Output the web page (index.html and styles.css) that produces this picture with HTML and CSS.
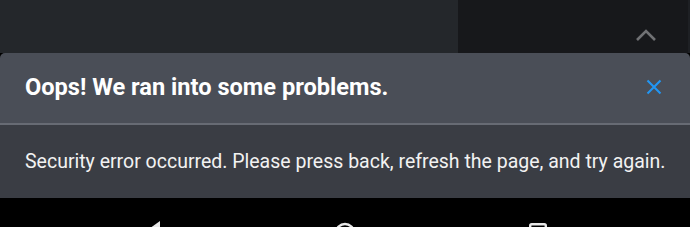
FILE: index.html
```html
<!DOCTYPE html>
<html lang="en">
<head>
<meta charset="utf-8">
<title>Error</title>
<link rel="stylesheet" href="styles.css">
</head>
<body>
<div class="screen">
  <div class="topbar">
    <div class="top-main"></div>
    <div class="top-side">
      <svg class="chevron" width="22" height="14" viewBox="0 0 22 14"><path d="M2 12 L11 3 L20 12" fill="none" stroke="#707174" stroke-width="2.6"/></svg>
    </div>
  </div>
  <div class="dialog">
    <div class="dialog-header">
      <h1 class="dialog-title">Oops! We ran into some problems.</h1>
      <button class="close" aria-label="Close">
        <svg width="16" height="16" viewBox="0 0 16 16"><path d="M1.5 1.5 L14.5 14.5 M14.5 1.5 L1.5 14.5" stroke="#2196f3" stroke-width="2.1" fill="none"/></svg>
      </button>
    </div>
    <div class="dialog-body">
      <p class="message">Security error occurred. Please press back, refresh the page, and try again.</p>
    </div>
  </div>
  <div class="navbar">
    <svg class="nav-back" width="20" height="20" viewBox="0 0 20 20"><path d="M17 0 L17 20 L3 10 Z" fill="#e8e8e8"/></svg>
    <svg class="nav-home" width="22" height="22" viewBox="0 0 22 22"><circle cx="11" cy="11" r="9" fill="none" stroke="#e8e8e8" stroke-width="2.4"/></svg>
    <svg class="nav-recent" width="18" height="18" viewBox="0 0 18 18"><rect x="1.2" y="1.2" width="15.6" height="15.6" rx="1.5" fill="none" stroke="#e8e8e8" stroke-width="2.4"/></svg>
  </div>
</div>
</body>
</html>
```
FILE: styles.css
```css
* { box-sizing: border-box; }
html, body { margin: 0; padding: 0; background: #000; }
body { font-family: Roboto, "Noto Sans", Arial, sans-serif; }
.screen { width: 690px; height: 227px; display: flex; flex-direction: column; overflow: hidden; background: #000; }
.topbar { height: 53px; display: flex; flex: none; }
.top-main { width: 458px; background: #24272b; }
.top-side { flex: 1; background: #17181b; display: flex; justify-content: flex-end; align-items: flex-start; padding: 28px 31px 0 0; border-right: 2px solid #1e2024; }
.chevron { display: block; }
.dialog { background: #4a4e57; border-radius: 5px 5px 0 0; flex: none; }
.dialog-header { height: 72px; display: flex; align-items: center; justify-content: space-between; padding: 0 28px 2px 25px; border-bottom: 2px solid #676b74; }
.dialog-title { margin: 0; color: #fff; font-size: 23.6px; font-weight: 700; letter-spacing: 0; line-height: 1.2; }
.close { background: none; border: 0; padding: 0; margin: 0; width: 16px; height: 16px; display: block; cursor: pointer; }
.close svg { display: block; }
.dialog-body { background: #3a3d44; height: 73px; display: flex; align-items: center; padding: 0 0 0 25px; }
.message { margin: 0; color: #f2f2f2; font-size: 19.5px; font-weight: 400; line-height: 1.2; white-space: nowrap; }
.navbar { flex: 1; background: #000; position: relative; }
.nav-back { position: absolute; left: 143px; top: 23px; }
.nav-home { position: absolute; left: 334px; top: 24px; }
.nav-recent { position: absolute; left: 529px; top: 25px; }
```
